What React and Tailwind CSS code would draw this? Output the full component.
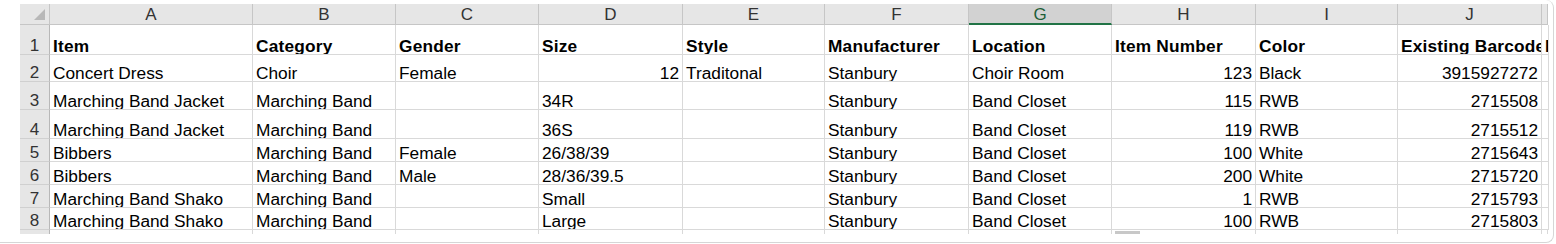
import React from "react"

const cols = ["A", "B", "C", "D", "E", "F", "G", "H", "I", "J", "K"]

// r = right aligned (numbers)
const rows = [
    [["Item"], ["Category"], ["Gender"], ["Size"], ["Style"], ["Manufacturer"], ["Location"], ["Item Number"], ["Color"], ["Existing Barcode"], ["N"]],
    [["Concert Dress"], ["Choir"], ["Female"], ["12", "r"], ["Traditonal"], ["Stanbury"], ["Choir Room"], ["123", "r"], ["Black"], ["3915927272", "r"], [""]],
    [["Marching Band Jacket"], ["Marching Band"], [""], ["34R"], [""], ["Stanbury"], ["Band Closet"], ["115", "r"], ["RWB"], ["2715508", "r"], [""]],
    [["Marching Band Jacket"], ["Marching Band"], [""], ["36S"], [""], ["Stanbury"], ["Band Closet"], ["119", "r"], ["RWB"], ["2715512", "r"], [""]],
    [["Bibbers"], ["Marching Band"], ["Female"], ["26/38/39"], [""], ["Stanbury"], ["Band Closet"], ["100", "r"], ["White"], ["2715643", "r"], [""]],
    [["Bibbers"], ["Marching Band"], ["Male"], ["28/36/39.5"], [""], ["Stanbury"], ["Band Closet"], ["200", "r"], ["White"], ["2715720", "r"], [""]],
    [["Marching Band Shako"], ["Marching Band"], [""], ["Small"], [""], ["Stanbury"], ["Band Closet"], ["1", "r"], ["RWB"], ["2715793", "r"], [""]],
    [["Marching Band Shako"], ["Marching Band"], [""], ["Large"], [""], ["Stanbury"], ["Band Closet"], ["100", "r"], ["RWB"], ["2715803", "r"], [""]],
]

function Corner() {
    return (
        <div className="relative bg-[#e6e6e6] border-r border-b border-[#c6c6c6]">
            <svg className="absolute right-[4px] bottom-[4px]" width="11" height="11" viewBox="0 0 11 11">
                <polygon points="11,0 11,11 0,11" fill="#b8b8b8" />
            </svg>
        </div>
    )
}

function ColHead({ letter }) {
    if (letter === "G") {
        return (
            <div className="flex items-center justify-center bg-[#d2d2d2] border-r border-[#c6c6c6] border-b-2 border-b-[#217346] text-[#1e5e38] text-[17px] leading-none pt-[1px]">
                {letter}
            </div>
        )
    }
    return (
        <div className="flex items-center justify-center bg-[#e6e6e6] border-r border-b border-[#c6c6c6] text-[#333] text-[17px] leading-none overflow-hidden">
            {letter === "K" ? "" : letter}
        </div>
    )
}

function RowHead({ n }) {
    return (
        <div className="flex items-end justify-center bg-[#e6e6e6] border-r border-r-[#b8b8b8] border-b border-b-[#d0d0d0] text-[#333] text-[17px] leading-[16px]">
            {n}
        </div>
    )
}

function Cell({ value, align, bold }) {
    return (
        <div
            className={
                "flex items-end overflow-hidden whitespace-nowrap bg-white border-r border-b border-[#d9d9d9] px-[3px] text-black text-[17.3px] leading-[16px] " +
                (align === "r" ? "justify-end " : "justify-start ") +
                (bold ? "font-bold tracking-[0.2px]" : "")
            }
        >
            {value}
        </div>
    )
}

export default function App() {
    return (
        <div className="relative w-[1554px] h-[243px] bg-white border-r border-b border-[#d6d6d6] rounded-br-[8px] rounded-tr-[8px] overflow-hidden pt-[4px] pl-[20px]" style={{ fontFamily: '"Liberation Sans", Arial, sans-serif' }}>
            <div className="grid grid-cols-[30px_203px_143px_143px_144px_142px_144px_143px_144px_142px_144px_6px] grid-rows-[21px_30px_27px_28px_29px_23px_23px_23px_22px_4px] w-[1528px]">
                <Corner />
                {cols.map(c => <ColHead key={c} letter={c} />)}

                {rows.map((row, i) => (
                    <React.Fragment key={i}>
                        <RowHead n={i + 1} />
                        {row.map((cell, j) => (
                            <Cell key={j} value={cell[0]} align={cell[1]} bold={i === 0} />
                        ))}
                    </React.Fragment>
                ))}

                <div className="bg-[#e6e6e6] border-r border-[#b8b8b8]" />
                {cols.map(c => <div key={c} className="bg-white border-r border-[#d9d9d9]" />)}
            </div>
            <div className="absolute left-[1115px] top-[231px] w-[25px] h-[3px] bg-[#c8c8c8]" />
        </div>
    )
}
